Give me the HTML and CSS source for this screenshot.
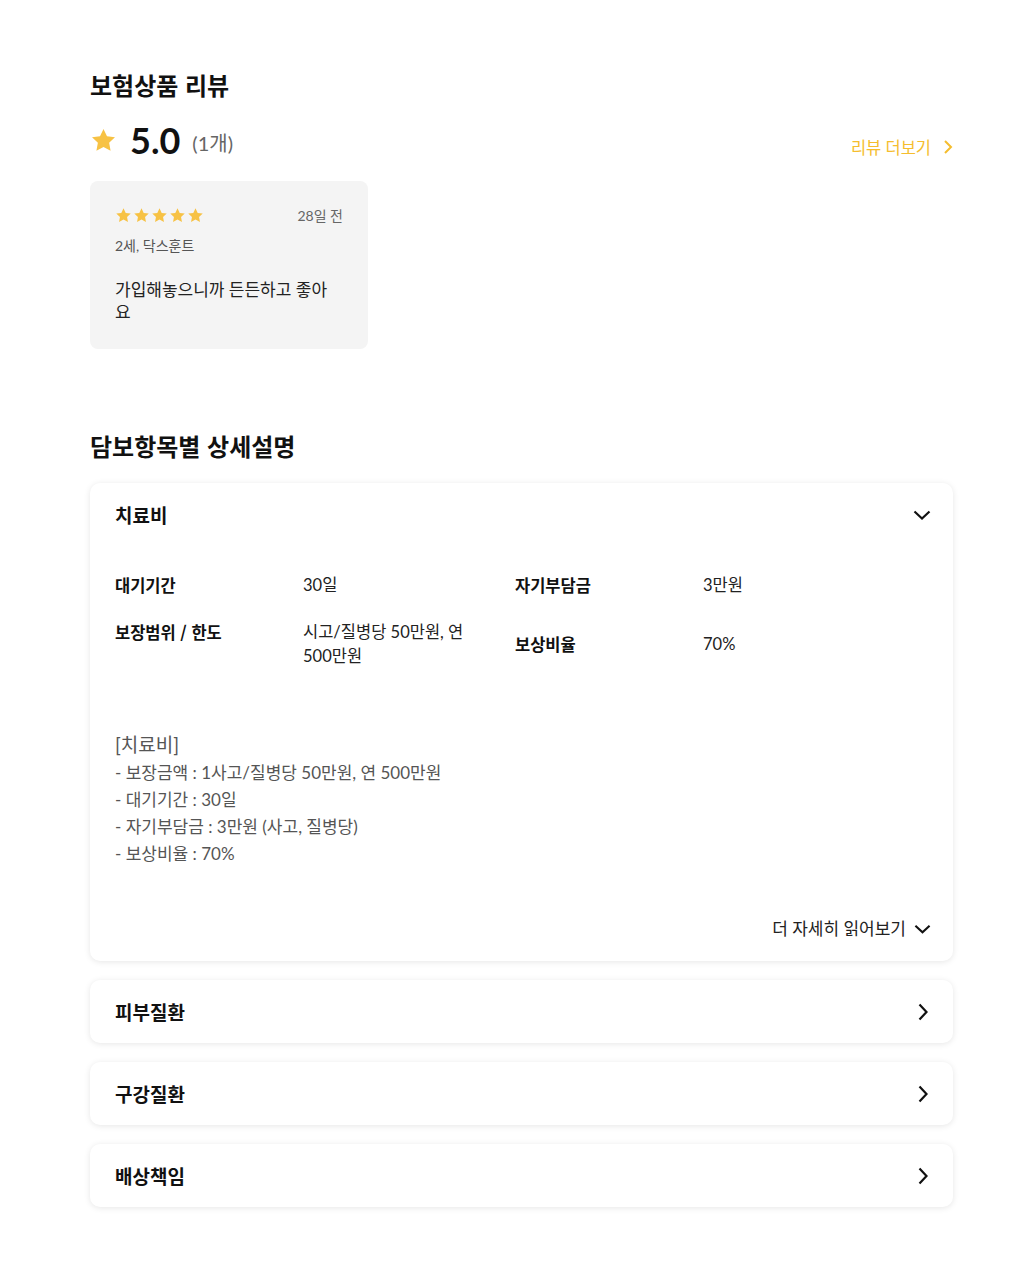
FILE: index.html
```html
<!DOCTYPE html>
<html lang="ko">
<head>
    <meta charset="utf-8">
    <title>보험상품 리뷰</title>
    <link rel="stylesheet" href="styles.css">
</head>
<body>

<div class="page">

    <!-- 리뷰 -->
    <h2 class="section-title">보험상품 리뷰</h2>

    <div class="rating-row">
        <div class="rating">
            <svg class="rating-star" viewBox="0 0 24 24"><path d="M12 1.8l3.1 6.5 7.1.9-5.2 4.9 1.3 7.1L12 17.8l-6.3 3.4 1.3-7.1-5.2-4.9 7.1-.9z"/></svg>
            <span class="rating-score">5.0</span>
            <span class="rating-count">(1개)</span>
        </div>
        <a class="more-link" href="#reviews">리뷰 더보기
            <svg class="more-chevron" viewBox="0 0 10 16"><path d="M2 2l6 6-6 6"/></svg>
        </a>
    </div>

    <div class="review-card">
        <div class="review-top">
            <div class="review-stars">
                <svg viewBox="0 0 24 24"><path d="M12 1.8l3.1 6.5 7.1.9-5.2 4.9 1.3 7.1L12 17.8l-6.3 3.4 1.3-7.1-5.2-4.9 7.1-.9z"/></svg>
                <svg viewBox="0 0 24 24"><path d="M12 1.8l3.1 6.5 7.1.9-5.2 4.9 1.3 7.1L12 17.8l-6.3 3.4 1.3-7.1-5.2-4.9 7.1-.9z"/></svg>
                <svg viewBox="0 0 24 24"><path d="M12 1.8l3.1 6.5 7.1.9-5.2 4.9 1.3 7.1L12 17.8l-6.3 3.4 1.3-7.1-5.2-4.9 7.1-.9z"/></svg>
                <svg viewBox="0 0 24 24"><path d="M12 1.8l3.1 6.5 7.1.9-5.2 4.9 1.3 7.1L12 17.8l-6.3 3.4 1.3-7.1-5.2-4.9 7.1-.9z"/></svg>
                <svg viewBox="0 0 24 24"><path d="M12 1.8l3.1 6.5 7.1.9-5.2 4.9 1.3 7.1L12 17.8l-6.3 3.4 1.3-7.1-5.2-4.9 7.1-.9z"/></svg>
            </div>
            <span class="review-date">28일 전</span>
        </div>
        <div class="review-pet">2세, 닥스훈트</div>
        <p class="review-text">가입해놓으니까 든든하고 좋아요</p>
    </div>

    <!-- 담보항목 -->
    <h2 class="section-title coverage-title">담보항목별 상세설명</h2>

    <div class="coverage-card open">
        <div class="coverage-head">
            <span class="coverage-name">치료비</span>
            <svg class="chevron-down" viewBox="0 0 18 10"><path d="M1.5 1.5l7.5 7 7.5-7"/></svg>
        </div>
        <div class="coverage-body">
            <div class="spec-grid">
                <div class="spec-label">대기기간</div>
                <div class="spec-value">30일</div>
                <div class="spec-label">자기부담금</div>
                <div class="spec-value">3만원</div>

                <div class="spec-label">보장범위 / 한도</div>
                <div class="spec-value">시고/질병당 50만원, 연 500만원</div>
                <div class="spec-label center">보상비율</div>
                <div class="spec-value center">70%</div>
            </div>

            <div class="coverage-desc">
                <div class="desc-title">[치료비]</div>
                <div>- 보장금액 : 1사고/질병당 50만원, 연 500만원</div>
                <div>- 대기기간 : 30일</div>
                <div>- 자기부담금 : 3만원 (사고, 질병당)</div>
                <div>- 보상비율 : 70%</div>
            </div>

            <div class="read-more">
                더 자세히 읽어보기
                <svg class="chevron-down small" viewBox="0 0 18 10"><path d="M1.5 1.5l7.5 7 7.5-7"/></svg>
            </div>
        </div>
    </div>

    <div class="coverage-card">
        <div class="coverage-head">
            <span class="coverage-name">피부질환</span>
            <svg class="chevron-right" viewBox="0 0 10 18"><path d="M1.5 1.5l7 7.5-7 7.5"/></svg>
        </div>
    </div>

    <div class="coverage-card">
        <div class="coverage-head">
            <span class="coverage-name">구강질환</span>
            <svg class="chevron-right" viewBox="0 0 10 18"><path d="M1.5 1.5l7 7.5-7 7.5"/></svg>
        </div>
    </div>

    <div class="coverage-card">
        <div class="coverage-head">
            <span class="coverage-name">배상책임</span>
            <svg class="chevron-right" viewBox="0 0 10 18"><path d="M1.5 1.5l7 7.5-7 7.5"/></svg>
        </div>
    </div>

</div>

</body>
</html>
```

FILE: styles.css
```css
body {
    margin: 0;
    background-color: #fff;
    color: #111;
    font-family: Lato, "Noto Sans CJK KR", sans-serif;
}

.page {
    width: 863px;
    margin-left: 90px;
    padding: 68px 0 56px;
}

.section-title {
    margin: 0;
    font-family: "Noto Sans CJK KR", sans-serif;
    font-size: 24px;
    font-weight: 700;
    line-height: 34px;
    color: #111;
}

/* rating */

.rating-row {
    display: flex;
    justify-content: space-between;
    align-items: center;
    margin-top: 16px;
    height: 44px;
}

.rating {
    display: flex;
    align-items: center;
}

.rating-star {
    width: 27px;
    height: 27px;
    fill: #f7c244;
    margin-right: 13px;
}

.rating-score {
    font-size: 36px;
    font-weight: 700;
    color: #111;
    line-height: 44px;
}

.rating-count {
    margin-left: 12px;
    margin-top: 5px;
    font-size: 20px;
    color: #666;
}

.more-link {
    display: flex;
    align-items: center;
    margin-top: 14px;
    font-size: 16.5px;
    color: #f5bd2e;
    text-decoration: none;
}

.more-chevron {
    width: 10px;
    height: 16px;
    margin-left: 12px;
    fill: none;
    stroke: #f5bd2e;
    stroke-width: 2;
}

/* review card */

.review-card {
    width: 278px;
    box-sizing: border-box;
    margin-top: 19px;
    padding: 24px 25px 26px;
    background-color: #f4f4f4;
    border-radius: 8px;
}

.review-top {
    display: flex;
    justify-content: space-between;
    align-items: center;
    height: 20px;
}

.review-stars {
    display: flex;
}

.review-stars svg {
    width: 17px;
    height: 17px;
    fill: #f7c244;
    margin-right: 1px;
}

.review-date {
    font-size: 14px;
    color: #666;
}

.review-pet {
    margin-top: 11px;
    font-size: 14px;
    line-height: 20px;
    color: #555;
}

.review-text {
    margin: 23px 0 0;
    padding-right: 8px;
    font-size: 17px;
    line-height: 22px;
    color: #222;
    word-break: break-all;
}

/* coverage */

.coverage-title {
    margin-top: 80px;
}

.coverage-card {
    margin-top: 19px;
    background-color: #fff;
    border-radius: 10px;
    box-shadow: 0 1px 6px rgba(0, 0, 0, 0.1);
}

.coverage-title + .coverage-card {
    margin-top: 20px;
}

.coverage-head {
    display: flex;
    justify-content: space-between;
    align-items: center;
    height: 63px;
    padding: 0 22px 0 25px;
}

.coverage-name {
    font-family: "Noto Sans CJK KR", sans-serif;
    font-size: 19px;
    font-weight: 700;
    color: #111;
}

.chevron-down {
    width: 18px;
    height: 10px;
    fill: none;
    stroke: #111;
    stroke-width: 2.2;
}

.chevron-down.small {
    width: 17px;
    margin-left: 8px;
}

.chevron-right {
    width: 10px;
    height: 18px;
    margin-right: 3px;
    fill: none;
    stroke: #111;
    stroke-width: 2.2;
}

.coverage-body {
    padding: 27px 22px 20px 25px;
}

.spec-grid {
    display: grid;
    grid-template-columns: 188px 212px 188px 1fr;
    row-gap: 23px;
    font-size: 16.5px;
    line-height: 24px;
}

.spec-label {
    font-family: "Noto Sans CJK KR", sans-serif;
    font-weight: 700;
    color: #111;
}

.spec-value {
    padding-right: 40px;
    color: #222;
}

.center {
    align-self: center;
}

.coverage-desc {
    margin-top: 62px;
    font-size: 17px;
    line-height: 27px;
    color: #555;
}

.desc-title {
    font-size: 19px;
    line-height: 29px;
}

.read-more {
    display: flex;
    justify-content: flex-end;
    align-items: center;
    margin-top: 50px;
    font-size: 17px;
    line-height: 24px;
    color: #222;
}
```
